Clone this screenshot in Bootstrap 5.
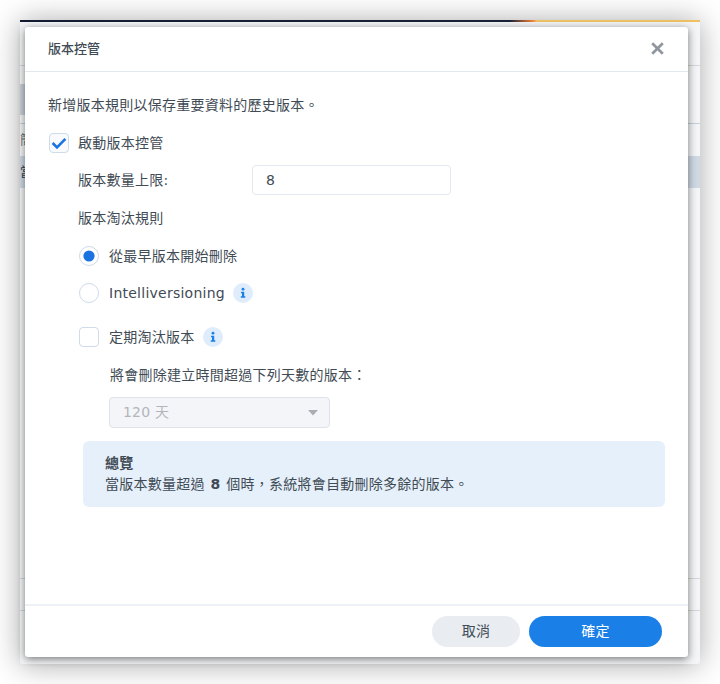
<!DOCTYPE html>
<html lang="zh-Hant">
<head>
<meta charset="utf-8">
<title>版本控管</title>
<link href="https://cdn.jsdelivr.net/npm/bootstrap@5.3.0/dist/css/bootstrap.min.css" rel="stylesheet">
<style>
html,body{height:100%;background:#fff;overflow:hidden}
body{font-family:"DejaVu Sans","Noto Sans CJK TC",sans-serif;font-size:14px;color:#414b55;letter-spacing:.25px}
.desk{width:680px;height:644px;margin:20px 0 0 20px;position:relative;background:#f4f5f6;border-radius:3px;
 box-shadow:0 1px 30px rgba(0,0,0,.34);overflow:visible}
.strip{height:2px;background:linear-gradient(90deg,#141c33 0,#1a2238 72%,#ef7f3a 75.3%,#efc266 76%,#efc266 100%)}
.bg-line{height:1px;background:#d3d8dd}
.bg-a{margin-top:43px}
.bg-band{height:31px;margin-top:18px;background:#c9d0d8;width:40px}
.bg-b{margin-top:8px;background:#c4d0dc}
.bg-text{height:32px;line-height:32px;color:#6c757d;font-size:13px;letter-spacing:0;white-space:nowrap;overflow:hidden}
.bg-sel{background:#cfd9e4;color:#39424b;height:32px;line-height:32px;font-size:13px;letter-spacing:0;white-space:nowrap}
.bg-c{margin-top:390px}
.bg-d{margin-top:31px}
.dlg{position:absolute;left:5px;top:7px;width:663px;height:630px;border:0;border-radius:3px;background:#fff;
 box-shadow:0 2px 9px rgba(0,0,0,.52);display:flex;flex-direction:column}
.dlg .modal-header{height:45px;flex:none;padding:0 25px 0 23px;border-bottom:1px solid #e3e8ee;border-radius:0}
.dlg-title{font-size:13px;font-weight:500;letter-spacing:0;color:#414b55;margin-top:-1px}
.x-btn{width:13px;height:13px;padding:0;border:0;background:none;display:block;line-height:0;margin-top:-1px;margin-right:-1px}
.dlg .modal-body{padding:18px 23px 0;flex:1 1 auto}
.ln{min-height:30px;display:flex;align-items:center}
.ind1{margin-left:31px}
.ind2{margin-left:62px}
.gap7{margin-top:7px}.gap8{margin-top:8px}.gap14{margin-top:14px}
.form-check-input.tick,.form-check-input.dot{width:20px;height:20px;margin:0 10px 0 0;flex:none;border:1px solid #cfdbe9;background-color:#fff;box-shadow:none;float:none}
.form-check-input.tick{border-radius:4px;margin-left:1px;margin-right:9px}
.form-check-input.tick.ms-0{margin-right:10px}
.form-check-input.tick:checked{background-color:#f8fafd;border-color:#cfdbe9;
 background-image:url("data:image/svg+xml,%3csvg xmlns='http://www.w3.org/2000/svg' viewBox='0 0 20 20'%3e%3cpath fill='none' stroke='%231a73e0' stroke-width='2.6' d='M3.6 10l4.4 4.4 8.4-8.6'/%3e%3c/svg%3e");background-size:20px 20px}
.form-check-input.dot:checked{background-color:#fff;border-color:#cfdbe9;
 background-image:url("data:image/svg+xml,%3csvg xmlns='http://www.w3.org/2000/svg' viewBox='0 0 20 20'%3e%3ccircle cx='10' cy='10' r='5.6' fill='%231a73e0'/%3e%3c/svg%3e");background-size:20px 20px}
.form-check-label{color:#414b55}
.lbl-w{width:173px;flex:none}
.ind1 .lbl-w{margin-left:-1px;width:174px}
.num-box{width:199px;height:30px;padding:0 13px;font-size:14px;color:#414b55;border:1.5px solid #e1e8f0;border-radius:4px;box-shadow:none}
.sel-box{width:221px;height:31px;margin-left:-1px;padding:0 13px;font-size:14px;border:1.5px solid #dee3e9;border-radius:4px;color:#b2b6bb;letter-spacing:.2px;
 background-color:#f3f5f8!important;opacity:1;
 background-image:url("data:image/svg+xml,%3csvg xmlns='http://www.w3.org/2000/svg' viewBox='0 0 10 6'%3e%3cpath fill='%23a9aeb4' d='M0 0h10L5 5.4z'/%3e%3c/svg%3e");background-size:10px 6px;background-position:right 11px center}
.inf{width:20px;height:20px;flex:none;margin-left:8px;display:block}
.plain-ln{margin-left:30px}
.note{margin:13px 0 0 35px;width:582px;height:66px;padding:12px 22px 0;background:#e6f0fa;border:0;border-radius:6px;color:#414b55;line-height:21px}
.note-h{font-weight:600;font-size:14px}
.note strong{font-weight:700;margin:0 1px;font-size:14px}
.dlg .modal-footer{height:53px;flex:none;padding:0 26px 0 0;border-top:2px solid #eef1f5;margin:0;gap:9px;border-radius:0;flex-wrap:nowrap}
.act{height:31px;padding:0;margin:0;border:0;border-radius:16px;font-size:14px;line-height:31px;letter-spacing:.2px}
.act-no{width:88px;background:#e9edf1;color:#414b55}
.act-ok{width:133px;background:#1a80e8;color:#fff}
.act-no:hover{background:#e9edf1;color:#414b55}.act-ok:hover{background:#1a80e8;color:#fff}
</style>
</head>
<body>
<div class="desk">
  <div class="strip"></div>
  <div class="bg-line bg-a"></div>
  <div class="bg-band"></div>
  <div class="bg-line bg-b"></div>
  <div class="bg-text">簡</div>
  <div class="bg-sel">當</div>
  <div class="bg-line bg-c"></div>
  <div class="bg-line bg-d"></div>

  <div class="modal-content dlg">
    <div class="modal-header d-flex justify-content-between align-items-center">
      <div class="dlg-title">版本控管</div>
      <button class="x-btn" type="button" aria-label="Close">
        <svg width="13" height="13" viewBox="0 0 13 13"><path d="M1.2 1.2l10.6 10.6M11.8 1.2L1.2 11.8" stroke="#8f969d" stroke-width="2.7" fill="none"/></svg>
      </button>
    </div>
    <div class="modal-body">
      <div class="ln">新增版本規則以保存重要資料的歷史版本。</div>
      <div class="ln gap8">
        <input class="form-check-input tick" type="checkbox" id="c1" checked>
        <label class="form-check-label" for="c1">啟動版本控管</label>
      </div>
      <div class="ln gap7 ind1">
        <label class="lbl-w" for="n1">版本數量上限:</label>
        <input class="form-control num-box" id="n1" type="text" value="8">
      </div>
      <div class="ln gap8 plain-ln">版本淘汰規則</div>
      <div class="ln gap8 ind1">
        <input class="form-check-input dot" type="radio" name="r" id="r1" checked>
        <label class="form-check-label" for="r1">從最早版本開始刪除</label>
      </div>
      <div class="ln gap7 ind1">
        <input class="form-check-input dot" type="radio" name="r" id="r2">
        <label class="form-check-label" for="r2">Intelliversioning</label>
        <svg class="inf" viewBox="0 0 20 20"><circle cx="10" cy="10" r="10" fill="#dfecfb"/><circle cx="10" cy="6.2" r="1.4" fill="#1a7fe8"/><path d="M8 8.8h3.2v4.4H12.3v1.5H7.8v-1.5h1.2v-2.9H8z" fill="#1a7fe8"/></svg>
      </div>
      <div class="ln gap14 ind1">
        <input class="form-check-input tick ms-0" type="checkbox" id="c2">
        <label class="form-check-label" for="c2">定期淘汰版本</label>
        <svg class="inf" viewBox="0 0 20 20"><circle cx="10" cy="10" r="10" fill="#dfecfb"/><circle cx="10" cy="6.2" r="1.4" fill="#1a7fe8"/><path d="M8 8.8h3.2v4.4H12.3v1.5H7.8v-1.5h1.2v-2.9H8z" fill="#1a7fe8"/></svg>
      </div>
      <div class="ln gap8 ind2">將會刪除建立時間超過下列天數的版本：</div>
      <div class="ln gap7 ind2">
        <select class="form-select sel-box" disabled><option>120 天</option></select>
      </div>
      <div class="note">
        <div class="note-h">總覽</div>
        <div>當版本數量超過 <strong>8</strong> 個時，系統將會自動刪除多餘的版本。</div>
      </div>
    </div>
    <div class="modal-footer">
      <button type="button" class="btn act act-no">取消</button>
      <button type="button" class="btn act act-ok">確定</button>
    </div>
  </div>
</div>
<script src="https://cdn.jsdelivr.net/npm/bootstrap@5.3.0/dist/js/bootstrap.bundle.min.js"></script>
</body>
</html>
